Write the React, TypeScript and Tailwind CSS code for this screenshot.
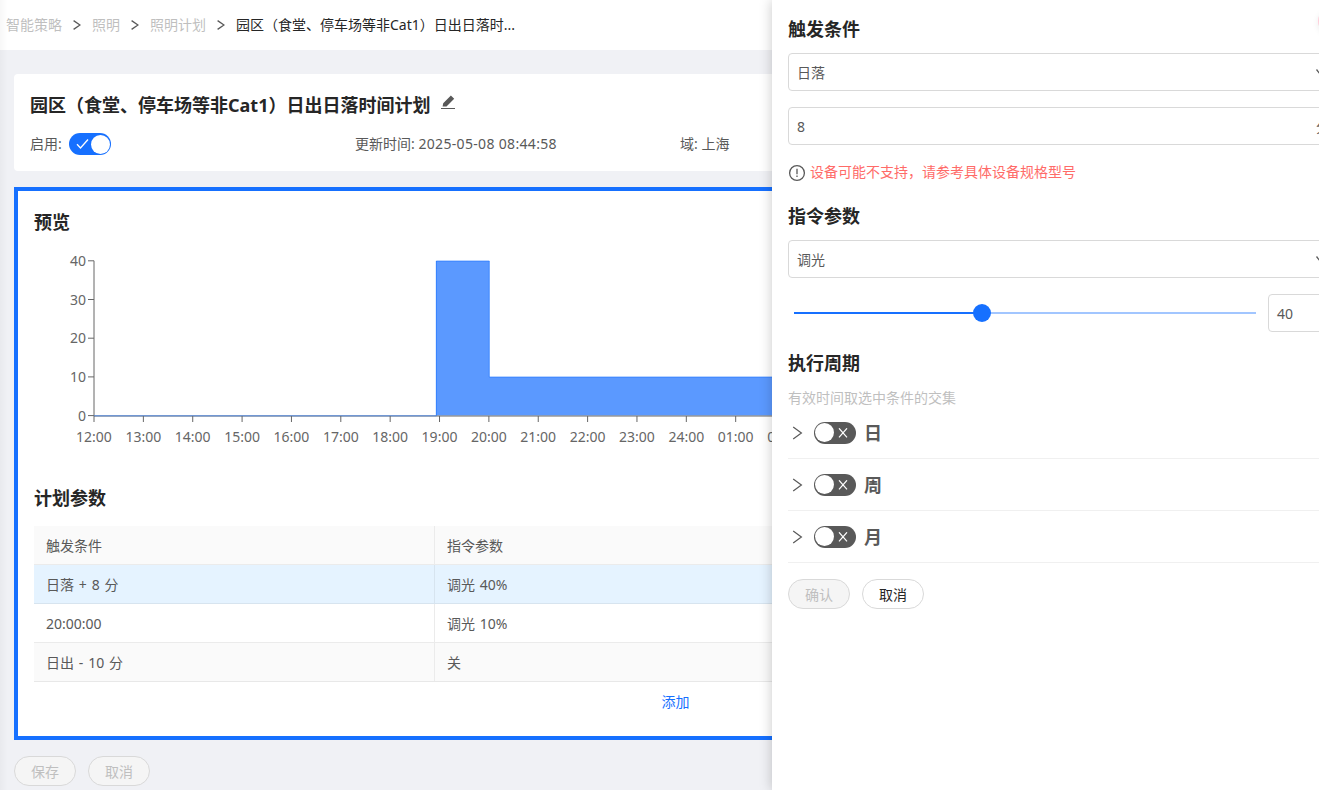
import type { ReactNode } from "react";
import clsx from "clsx";

const crumbs = ["智能策略", "照明", "照明计划"];

const rows = [
  { trigger: "日落 + 8 分", command: "调光 40%", tone: "active" },
  { trigger: "20:00:00", command: "调光 10%", tone: "plain" },
  { trigger: "日出 - 10 分", command: "关", tone: "striped" },
];

const hours = [
  "12:00", "13:00", "14:00", "15:00", "16:00", "17:00", "18:00", "19:00",
  "20:00", "21:00", "22:00", "23:00", "24:00", "01:00", "02:00", "03:00",
];

function ChevronRight() {
  return (
    <svg width="12" height="14" viewBox="0 0 12 14" fill="none" stroke="#595959" strokeWidth="1.2">
      <path d="M1.2 1 9.4 7 1.2 13" />
    </svg>
  );
}

function CrumbSeparator() {
  return (
    <svg className="mx-[11px]" width="8" height="12" viewBox="0 0 8 12" fill="none" stroke="#595959" strokeWidth="1.3">
      <path d="M.6 1.6 7 6 .6 10.4" />
    </svg>
  );
}

function ChevronDown() {
  return (
    <svg width="8" height="6" viewBox="0 0 8 6" fill="none" stroke="#595959" strokeWidth="1.3">
      <path d="M.5.5 4 5 7.5.5" />
    </svg>
  );
}

function Toggle({ on = false }: { on?: boolean }) {
  return (
    <span
      className={clsx(
        "flex h-[22px] w-[42px] shrink-0 items-center justify-between rounded-full px-px",
        on ? "bg-[#1670ff] pl-[7px]" : "bg-[#595959] pr-[7px]",
      )}
    >
      {on ? (
        <svg width="13" height="12" viewBox="0 0 13 12" fill="none" stroke="#fff" strokeWidth="1.3">
          <path d="M1 6.2 4.5 10 12 1.5" />
        </svg>
      ) : null}
      <span className="size-[19px] rounded-full bg-white" />
      {on ? null : (
        <svg width="12" height="10" viewBox="0 0 12 10" fill="none" stroke="#fff" strokeWidth="1.2">
          <path d="M2 .3 10 9.3M10 .3 2 9.3" />
        </svg>
      )}
    </span>
  );
}

function PillButton({ children, disabled = false }: { children: ReactNode; disabled?: boolean }) {
  return (
    <button
      className={clsx(
        "flex h-[30px] w-[62px] items-center justify-center rounded-full border border-[#d9d9d9] pt-0.5 leading-none",
        disabled ? "bg-[#f5f5f5] text-[#bfbfbf]" : "bg-white text-[#262626]",
      )}
      disabled={disabled}
    >
      {children}
    </button>
  );
}

function Heading({ children }: { children: ReactNode }) {
  return <h2 className="text-lg leading-7 font-bold text-[#262626]">{children}</h2>;
}

function PreviewChart() {
  const x0 = 60;
  const step = 49.36;
  const y0 = 170.6;
  const unit = 3.87;

  return (
    <svg className="block" width="1283" height="210" fontSize="14">
      {[0, 10, 20, 30, 40].map((v) => (
        <g key={v}>
          <path d={`M54 ${y0 - v * unit}h6`} stroke="#666" />
          <text x="52" y={y0 - v * unit + 5} textAnchor="end" fill="#666">
            {v}
          </text>
        </g>
      ))}
      <path d={`M${x0} 15.8V${y0}`} stroke="#666" />
      <path d={`M402 ${y0}V16H455.3V132H1240V${y0}Z`} fill="#5b99ff" />
      <path d={`M${x0} 171H1240`} stroke="#666" />
      <path d="M60 170.8H402.3V16H455.3V132H1240" fill="none" stroke="#1670ff" strokeOpacity=".6" />
      {hours.map((h, i) => (
        <g key={h}>
          <path d={`M${x0 + i * step} 171v6`} stroke="#666" />
          <text x={x0 + i * step} y="197" textAnchor="middle" fill="#666">
            {h}
          </text>
        </g>
      ))}
    </svg>
  );
}

function PeriodRow({ label }: { label: string }) {
  return (
    <div className="flex h-[52px] items-center border-b border-[#f0f0f0] pl-1">
      <ChevronRight />
      <span className="ml-2.5">
        <Toggle />
      </span>
      <span className="ml-2 pt-px text-lg font-bold">{label}</span>
    </div>
  );
}

function SelectBox({ value }: { value: string }) {
  return (
    <div className="flex h-[38px] items-center justify-between rounded border border-[#d9d9d9] pr-[11px] pl-2">
      <span className="pt-0.5">{value}</span>
      <ChevronDown />
    </div>
  );
}

/** Slide-over form for editing a single plan entry. */
function Drawer() {
  return (
    <aside className="absolute inset-y-0 left-[772px] w-[580px] bg-white px-4 pt-[15px] shadow-[0_0_12px_rgba(0,0,0,0.22)]">
      <span className="absolute top-[9px] left-[546px] size-6 rounded-full bg-[#ffccd8] shadow-[0_2px_6px_rgba(0,0,0,0.08)]" />
      <Heading>触发条件</Heading>
      <div className="mt-2.5">
        <SelectBox value="日落" />
      </div>
      <div className="mt-4 flex h-[38px] items-center justify-between rounded border border-[#d9d9d9] pt-px pr-[5px] pl-2">
        <span>8</span>
        <span className="pt-px">分</span>
      </div>
      <div className="mt-[17px] flex h-5 items-center gap-1 text-[#ff6b68]">
        <svg className="mt-0.5" width="18" height="18" viewBox="0 0 18 18" fill="none" stroke="#595959" strokeWidth="1.3">
          <circle cx="9" cy="9" r="7.4" />
          <path d="M9 4.8v5.4M9 11.6v1.4" />
        </svg>
        设备可能不支持，请参考具体设备规格型号
      </div>

      <div className="mt-5">
        <Heading>指令参数</Heading>
      </div>
      <div className="mt-2.5">
        <SelectBox value="调光" />
      </div>
      <div className="mt-4 flex h-[38px] items-center">
        <div className="relative ml-1.5 h-0.5 w-[462px] bg-[#a2c6ff]">
          <div className="h-0.5 w-[188px] bg-[#1670ff]" />
          <span className="absolute -top-2 left-[179px] size-[18px] rounded-full bg-[#1670ff]" />
        </div>
        <div className="ml-3 flex h-[38px] w-[68px] items-center rounded border border-[#d9d9d9] pt-px pl-2">40</div>
      </div>

      <div className="mt-[17px]">
        <Heading>执行周期</Heading>
      </div>
      <p className="mt-[11px] h-[19px] leading-5 text-[#bfbfbf]">有效时间取选中条件的交集</p>
      <PeriodRow label="日" />
      <PeriodRow label="周" />
      <PeriodRow label="月" />
      <div className="mt-4 flex gap-3">
        <PillButton disabled>确认</PillButton>
        <PillButton>取消</PillButton>
      </div>
    </aside>
  );
}

export default function App() {
  return (
    <div className="relative h-[790px] w-full overflow-hidden bg-[#f0f1f5] font-['Noto_Sans','Noto_Sans_CJK_SC',sans-serif] text-sm text-[#595959]">
      <nav className="flex h-[50px] items-center bg-white pl-1.5 leading-5">
        {crumbs.map((c) => (
          <span key={c} className="flex items-center text-[#bfbfbf]">
            {c}
            <CrumbSeparator />
          </span>
        ))}
        <span className="text-[#262626]">园区（食堂、停车场等非Cat1）日出日落时...</span>
      </nav>

      <main className="w-[1337px] pt-6 pl-3.5">
        <section className="h-[97px] rounded bg-white px-4 pt-[17px]">
          <div className="flex h-7 items-center gap-[11px]">
            <h1 className="text-lg leading-7 font-bold text-[#262626]">园区（食堂、停车场等非Cat1）日出日落时间计划</h1>
            <svg className="-mt-1.5" width="14" height="15" viewBox="0 0 14 15" fill="#595959">
              <path d="M1.6 11.6 2.2 8.2 9.9.5 13.2 3.8 5.5 11.4ZM0 13h14v1H0Z" />
            </svg>
          </div>
          <div className="mt-3.5 grid h-[22px] grid-cols-[325px_325px_1fr] items-center">
            <div className="flex items-center gap-[7px]">
              启用: <Toggle on />
            </div>
            <div>
              更新时间: <span className="tracking-[0.33px]">2025-05-08 08:44:58</span>
            </div>
            <div>域: 上海</div>
          </div>
        </section>

        <section className="mt-4 h-[553px] border-4 border-[#1670ff] bg-white px-4 pt-[17px]">
          <Heading>预览</Heading>
          <div className="mt-[9px]">
            <PreviewChart />
          </div>
          <div className="mt-[29px]">
            <Heading>计划参数</Heading>
          </div>
          <div className="mt-3.5">
            <div className="grid h-[39px] grid-cols-[401px_1fr] border-b border-[#ebebeb] bg-[#fafafa]">
              <div className="flex items-center border-r border-[#ebebeb] pt-0.5 pl-3">触发条件</div>
              <div className="flex items-center pt-0.5 pl-3">指令参数</div>
            </div>
            {rows.map((r) => (
              <div
                key={r.trigger}
                className={clsx(
                  "grid h-[39px] grid-cols-[401px_1fr] border-b",
                  r.tone === "active" && "border-[#d7e4ef] bg-[#e5f3ff]",
                  r.tone === "plain" && "border-[#ebebeb] bg-white",
                  r.tone === "striped" && "border-[#e8e8e8] bg-[#fafafa]",
                )}
              >
                <div
                  className={clsx(
                    "flex items-center border-r pt-0.5 pl-3 [word-spacing:1.2px]",
                    r.tone === "active" ? "border-[#d7e4ef]" : "border-[#ebebeb]",
                  )}
                >
                  {r.trigger}
                </div>
                <div className="flex items-center pt-0.5 pl-3 [word-spacing:1.2px]">{r.command}</div>
              </div>
            ))}
          </div>
          <div className="mt-2.5 text-center leading-5 text-[#1670ff]">添加</div>
        </section>

        <div className="mt-4 flex gap-3">
          <PillButton disabled>保存</PillButton>
          <PillButton disabled>取消</PillButton>
        </div>
      </main>

      <div className="absolute inset-y-0 left-0 w-2 bg-gradient-to-r from-black/[0.03] to-transparent" />
      <Drawer />
    </div>
  );
}
